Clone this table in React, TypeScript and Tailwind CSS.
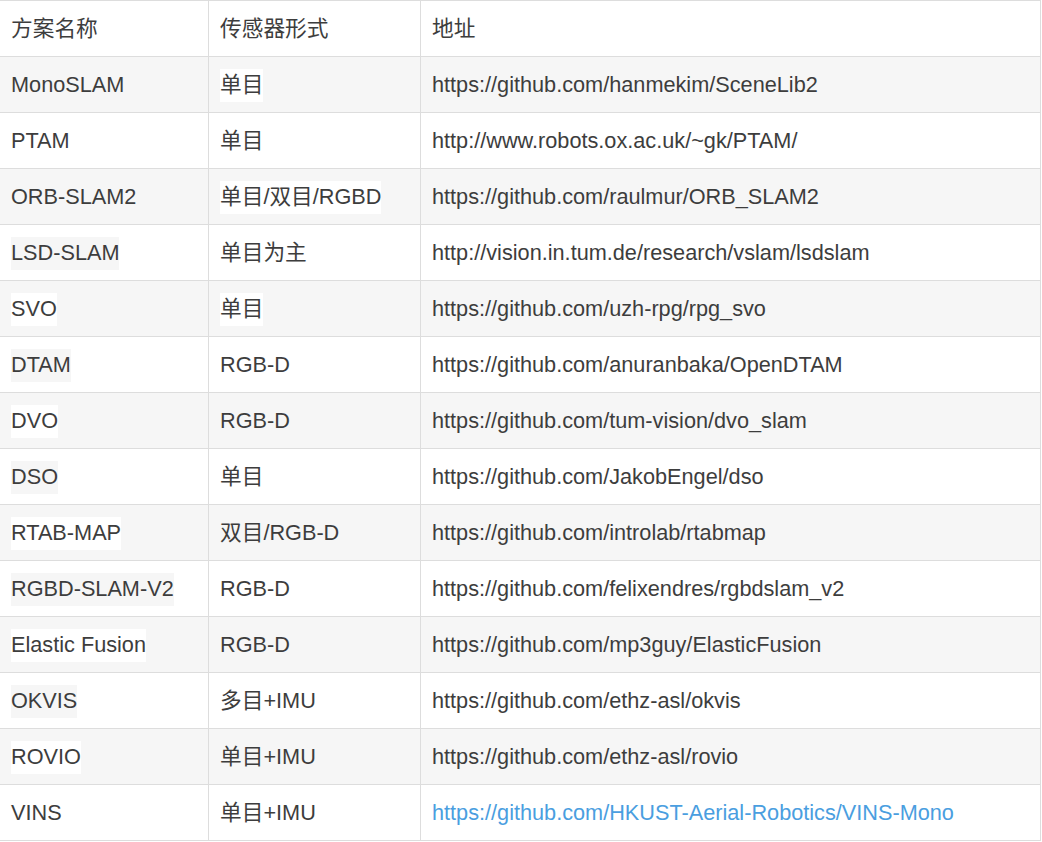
const rows: { name: string; sensor: string; url: string; hlName?: boolean; hlSensor?: boolean; link?: boolean }[] = [
  { name: "MonoSLAM", sensor: "单目", url: "https://github.com/hanmekim/SceneLib2", hlSensor: true },
  { name: "PTAM", sensor: "单目", url: "http://www.robots.ox.ac.uk/~gk/PTAM/" },
  { name: "ORB-SLAM2", sensor: "单目/双目/RGBD", url: "https://github.com/raulmur/ORB_SLAM2", hlSensor: true },
  { name: "LSD-SLAM", sensor: "单目为主", url: "http://vision.in.tum.de/research/vslam/lsdslam", hlName: true },
  { name: "SVO", sensor: "单目", url: "https://github.com/uzh-rpg/rpg_svo", hlName: true, hlSensor: true },
  { name: "DTAM", sensor: "RGB-D", url: "https://github.com/anuranbaka/OpenDTAM", hlName: true },
  { name: "DVO", sensor: "RGB-D", url: "https://github.com/tum-vision/dvo_slam", hlName: true },
  { name: "DSO", sensor: "单目", url: "https://github.com/JakobEngel/dso", hlName: true },
  { name: "RTAB-MAP", sensor: "双目/RGB-D", url: "https://github.com/introlab/rtabmap", hlName: true },
  { name: "RGBD-SLAM-V2", sensor: "RGB-D", url: "https://github.com/felixendres/rgbdslam_v2", hlName: true },
  { name: "Elastic Fusion", sensor: "RGB-D", url: "https://github.com/mp3guy/ElasticFusion", hlName: true },
  { name: "OKVIS", sensor: "多目+IMU", url: "https://github.com/ethz-asl/okvis", hlName: true },
  { name: "ROVIO", sensor: "单目+IMU", url: "https://github.com/ethz-asl/rovio", hlName: true },
  { name: "VINS", sensor: "单目+IMU", url: "https://github.com/HKUST-Aerial-Robotics/VINS-Mono", link: true },
];

function Cell({ text, hl, odd, className }: { text: string; hl?: boolean; odd: boolean; className?: string }) {
  return (
    <div className={`flex items-center border-r border-[#dddddd] pt-[2px] ${className ?? "pl-[11px]"}`}>
      <span className={hl ? (odd ? "bg-white" : "bg-[#f6f6f6]") : ""}>{text}</span>
    </div>
  );
}

export default function App() {
  return (
    <div
      className="w-[1041px] border-t border-[#dddddd] bg-white text-[21.7px] text-[#3d3d3d]"
      style={{ fontFamily: '"Liberation Sans", Arial, "Noto Sans CJK SC", sans-serif' }}
    >
      {/* header */}
      <div className="grid h-14 grid-cols-[209px_212px_620px] border-b border-[#dddddd] bg-white">
        <Cell text="方案名称" odd={false} />
        <Cell text="传感器形式" odd={false} />
        <Cell text="地址" odd={false} className="pl-[11px]" />
      </div>
      {rows.map((r, i) => {
        const odd = i % 2 === 0;
        return (
          <div
            key={r.name}
            className={`grid h-14 grid-cols-[209px_212px_620px] border-b border-[#dddddd] ${odd ? "bg-[#f6f6f6]" : "bg-white"}`}
          >
            <Cell text={r.name} hl={r.hlName} odd={odd} />
            <Cell text={r.sensor} hl={r.hlSensor} odd={odd} />
            <div className="flex items-center border-r border-[#dddddd] pl-[11px] pt-[2px]">
              {r.link ? (
                <a href={r.url} className="text-[#4a9ee0]">
                  {r.url}
                </a>
              ) : (
                <span>{r.url}</span>
              )}
            </div>
          </div>
        );
      })}
    </div>
  );
}
